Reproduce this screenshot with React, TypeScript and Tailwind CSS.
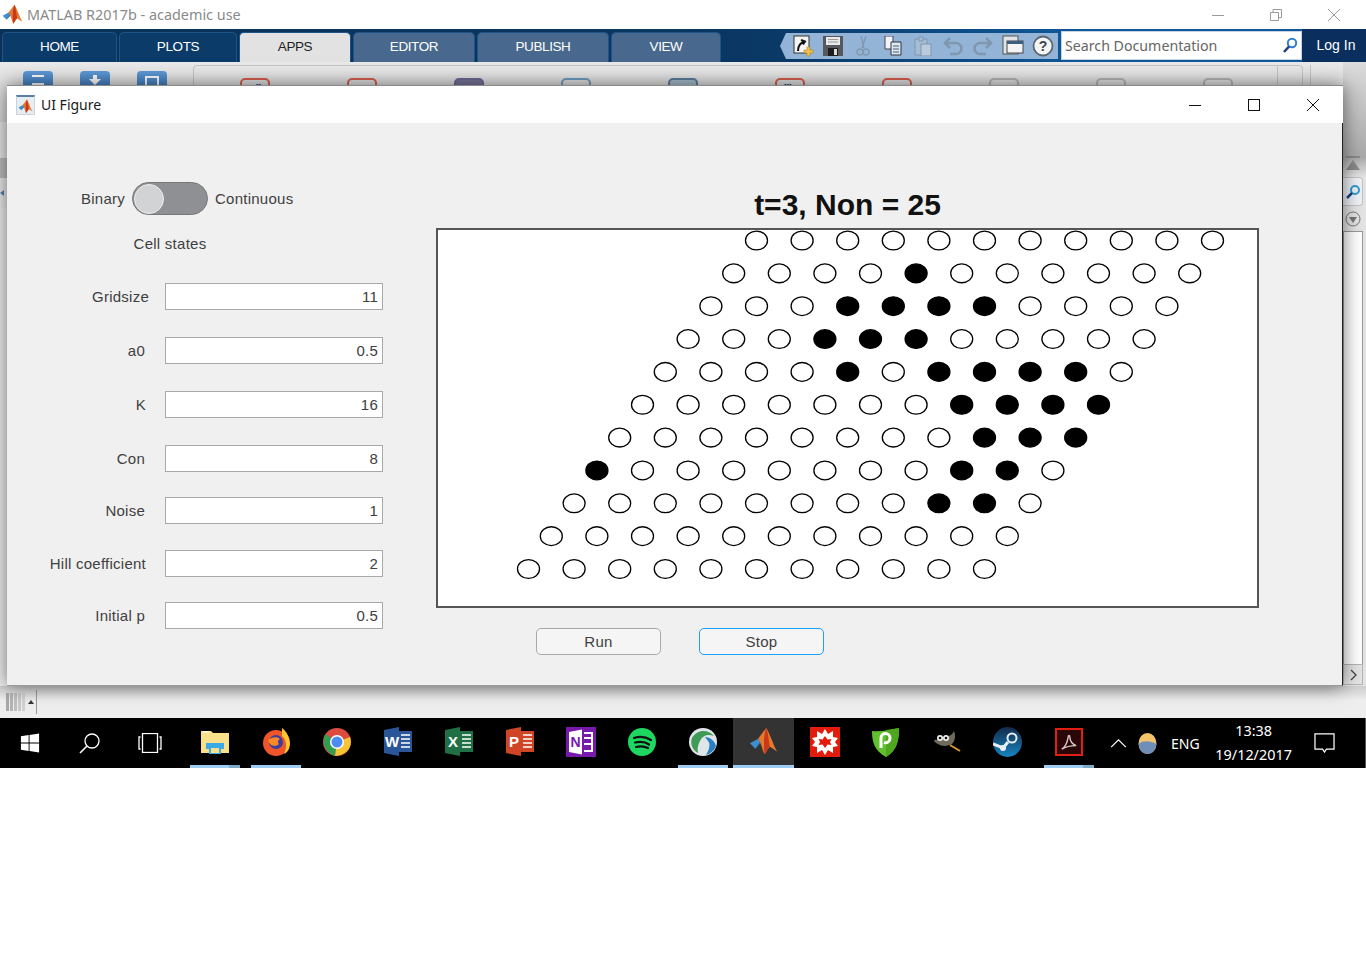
import type { ReactNode } from 'react';

const TABS = [
  { label: 'HOME', w: 'w-[115px]', tone: 'bg-[#0b3b69] text-white' },
  { label: 'PLOTS', w: 'w-[118px]', tone: 'bg-[#0b3b69] text-white' },
  { label: 'APPS', w: 'w-[112px]', tone: 'bg-[#e2e2e2] text-[#222]' },
  { label: 'EDITOR', w: 'w-[122px]', tone: 'bg-[#48698d] text-white' },
  { label: 'PUBLISH', w: 'w-[132px]', tone: 'bg-[#48698d] text-white' },
  { label: 'VIEW', w: 'w-[110px]', tone: 'bg-[#48698d] text-white' },
];

const GALLERY = [
  { tone: 'border-[#d9604f]', dots: 'pl-[14px] text-[#1d4f8c]', glyph: '▪▪' },
  { tone: 'border-[#d9604f]', dots: '', glyph: '' },
  { tone: 'border-[#6d6a96] bg-[#77779c]', dots: '', glyph: '' },
  { tone: 'border-[#6f9fc6]', dots: '', glyph: '' },
  { tone: 'border-[#5c7f9f] bg-[#a9bfd0]', dots: '', glyph: '' },
  { tone: 'border-[#d9604f]', dots: 'pl-[7px] text-[#1d4f8c]', glyph: '▪▪▪' },
  { tone: 'border-[#d9604f]', dots: '', glyph: '' },
  { tone: 'border-[#b5b5b5]', dots: '', glyph: '' },
  { tone: 'border-[#b5b5b5]', dots: '', glyph: '' },
  { tone: 'border-[#b5b5b5]', dots: '', glyph: '' },
];

const FIELDS = [
  { label: 'Gridsize', value: '11', pad: 'pr-[16px]', gap: 'mt-[27px]' },
  { label: 'a0', value: '0.5', pad: 'pr-[20px]', gap: 'mt-[27px]' },
  { label: 'K', value: '16', pad: 'pr-[19px]', gap: 'mt-[27px]' },
  { label: 'Con', value: '8', pad: 'pr-[20px]', gap: 'mt-[27px]' },
  { label: 'Noise', value: '1', pad: 'pr-[20px]', gap: 'mt-[25px]' },
  { label: 'Hill coefficient', value: '2', pad: 'pr-[19px]', gap: 'mt-[26px]' },
  { label: 'Initial p', value: '0.5', pad: 'pr-[20px]', gap: 'mt-[25px]' },
];

// filled cells of each row, row 0 is the top one
const ON: number[][] = [[], [4], [3, 4, 5, 6], [3, 4, 5], [4, 6, 7, 8, 9], [7, 8, 9, 10], [8, 9, 10], [0, 8, 9], [8, 9], [], []];

function MatlabLogo({ size }: { size: number }) {
  return (
    <svg width={size} height={size} viewBox="0 0 32 32">
      <path d="M1 18 L10 13 L13 17 L7 24 Z" fill="#3f8fd0" />
      <path d="M7 24 L13 17 L10 13 L15 12 Z" fill="#1f5f9e" />
      <path d="M10 13 L19 1 C22 5 27 20 31 27 C27 25 25 22 23 22 C20 24 19 29 17 30 C15 26 14 19 10 13 Z" fill="#e8792b" />
      <path d="M19 1 C17 6 16 12 17 30 C19 29 20 24 23 22 C22 14 21 6 19 1 Z" fill="#c8381c" />
    </svg>
  );
}

function Caption({ kind, color }: { kind: 'min' | 'max' | 'restore' | 'close'; color: string }) {
  return (
    <svg width="14" height="14" viewBox="0 0 14 14" fill="none" stroke={color} strokeWidth="1">
      {kind === 'min' && <path d="M1 7.500h12" />}
      {kind === 'max' && <rect x="1.500" y="1.500" width="11" height="11" />}
      {kind === 'restore' && <path d="M1.500 4.500h8v8h-8zM4 4.500v-3h8.500v8h-3" />}
      {kind === 'close' && <path d="M1 1l12 12M13 1L1 13" />}
    </svg>
  );
}

const QUICK: ReactNode[] = [
  <svg key="new" width="22" height="22" viewBox="0 0 22 22">
    <rect x="2" y="1" width="15" height="17" fill="#f4f4f4" stroke="#333" />
    <path d="M6 16c0-5 2-8 6-9M9 5l4 1.500-2 3" fill="none" stroke="#111" strokeWidth="2" />
    <path d="M15 12h3v3h3v3h-3v3h-3v-3h-3v-3h3z" fill="#efc14a" stroke="#a8842a" strokeWidth=".6" />
  </svg>,
  <svg key="save" width="20" height="20" viewBox="0 0 20 20">
    <path d="M0 0h20v20H0z" fill="#55585c" />
    <rect x="3" y="1" width="14" height="8" fill="#e9e9e9" />
    <path d="M5 3.500h10M5 6h10" stroke="#999" />
    <rect x="5" y="12" width="10" height="8" fill="#1d1d1d" />
    <rect x="11" y="13" width="3" height="6" fill="#ddd" />
  </svg>,
  <svg key="cut" width="20" height="20" viewBox="0 0 20 20" fill="none" stroke="#7f97af" strokeWidth="1.300">
    <path d="M8 0l3 12M13 0l-4 12" />
    <circle cx="7" cy="16" r="3" />
    <circle cx="13" cy="16" r="3" />
  </svg>,
  <svg key="copy" width="20" height="20" viewBox="0 0 20 20">
    <path d="M2 0h8v13H2z" fill="#f2f5f8" stroke="#445" />
    <path d="M8 6h10v13H8z" fill="#dfe7ef" stroke="#334" />
    <path d="M10 10h6M10 13h6M10 16h6" stroke="#46607a" />
  </svg>,
  <svg key="paste" width="20" height="20" viewBox="0 0 20 20" fill="#a5bcd2" stroke="#7f97af">
    <path d="M2 3h12v16H2z" />
    <path d="M6 1h4v4H6z" />
    <path d="M8 8h10v12H8z" fill="#b9cbdc" />
  </svg>,
  <svg key="undo" width="22" height="20" viewBox="0 0 22 20" fill="none" stroke="#7f97af" strokeWidth="2.600">
    <path d="M8 2L3 7l5 5M3 7h11a5 5 0 010 11H8" />
  </svg>,
  <svg key="redo" width="22" height="20" viewBox="0 0 22 20" fill="none" stroke="#7f97af" strokeWidth="2.600">
    <path d="M14 2l5 5-5 5M19 7H8a5 5 0 000 11h6" />
  </svg>,
  <svg key="layout" width="22" height="22" viewBox="0 0 22 22">
    <rect x="1" y="1" width="15" height="18" fill="#dfe3e7" stroke="#555" />
    <rect x="5" y="6" width="16" height="12" fill="#f4f4f4" stroke="#444" />
    <rect x="5" y="6" width="16" height="3" fill="#3c5e80" />
  </svg>,
  <svg key="help" width="22" height="22" viewBox="0 0 22 22">
    <circle cx="11" cy="11" r="9.500" fill="#f5f5f5" stroke="#5c6670" strokeWidth="1.800" />
    <text x="11" y="16" textAnchor="middle" fontSize="14" fontWeight="700" fontFamily="Liberation Sans, sans-serif" fill="#3c4650">?</text>
  </svg>,
];

function Letter({ bg, ch }: { bg: string; ch: string }) {
  return (
    <svg width="28" height="29" viewBox="0 0 28 29">
      <path d="M0 3L15 0v29L0 26z" fill={bg} />
      <rect x="14" y="4" width="14" height="21" fill={bg} />
      <path d="M17 8h9M17 12h9M17 16h9M17 20h9" stroke="#fff" strokeWidth="1.500" />
      <text x="8" y="20" textAnchor="middle" fontSize="15" fontWeight="700" fontFamily="Liberation Sans, sans-serif" fill="#fff">{ch}</text>
    </svg>
  );
}

const TASK_ICONS: { key: string; bar?: string; active?: boolean; icon: ReactNode }[] = [
  {
    key: 'explorer',
    bar: 'bg-[linear-gradient(90deg,#9dcdf2_78%,#7fa9c7_78%)]',
    icon: (
      <svg width="28" height="24" viewBox="0 0 28 24">
        <path d="M0 1h10l2 2h16v20H0z" fill="#fbe08c" />
        <rect x="2" y="1" width="6" height="2" fill="#fff6cf" />
        <path d="M5 13h18v6h-3v5h-12v-5H5z" fill="#3aa9e6" />
        <rect x="10" y="18" width="8" height="5" fill="#fbe08c" />
      </svg>
    ),
  },
  {
    key: 'firefox',
    bar: 'bg-[#9dcdf2]',
    icon: (
      <svg width="28" height="28" viewBox="0 0 28 28">
        <circle cx="14" cy="15" r="13" fill="#f0552a" />
        <path d="M20 0c4 3 8 9 8 15 0 5-2 9-6 11 3-6 3-14-2-18z" fill="#ffc52e" />
        <circle cx="14" cy="14" r="7" fill="#3c3e9e" />
        <path d="M6 12c4-3 9-4 12-1-2 1-3 3-1 5-3 3-9 3-11-4z" fill="#f98a25" />
      </svg>
    ),
  },
  {
    key: 'chrome',
    icon: (
      <svg width="28" height="28" viewBox="0 0 28 28">
        <circle cx="14" cy="14" r="14" fill="#dd4b3e" />
        <path d="M14 14L2.500 6C-2 14 2 25 12 28z" fill="#2f9e50" />
        <path d="M14 14l13-5c3 9-2 18-15 19z" fill="#f6c533" />
        <circle cx="14" cy="14" r="7" fill="#fff" />
        <circle cx="14" cy="14" r="5.500" fill="#4c8bf0" />
      </svg>
    ),
  },
  { key: 'word', icon: <Letter bg="#2a5699" ch="W" /> },
  { key: 'excel', icon: <Letter bg="#1f7145" ch="X" /> },
  { key: 'powerpoint', icon: <Letter bg="#d04525" ch="P" /> },
  {
    key: 'onenote',
    icon: (
      <svg width="30" height="30" viewBox="0 0 30 30">
        <rect width="30" height="30" fill="#7719aa" />
        <path d="M3 5l13-2.500v25L3 25z" fill="#fff" />
        <text x="9.500" y="20" textAnchor="middle" fontSize="14" fontWeight="700" fontFamily="Liberation Sans, sans-serif" fill="#7719aa">N</text>
        <path d="M18 6h8v18h-8" fill="none" stroke="#fff" strokeWidth="2" />
        <path d="M18 11h8M18 17h8" stroke="#fff" strokeWidth="2" />
      </svg>
    ),
  },
  {
    key: 'spotify',
    icon: (
      <svg width="28" height="28" viewBox="0 0 28 28">
        <circle cx="14" cy="14" r="14" fill="#1ed760" />
        <path d="M6 10c6-2 12-1 17 2M7 14.500c5-1 10-1 14 2M8 19c4-1 8-1 12 1" fill="none" stroke="#111" strokeWidth="2.200" strokeLinecap="round" />
      </svg>
    ),
  },
  {
    key: 'globe',
    bar: 'bg-[#9dcdf2]',
    icon: (
      <svg width="28" height="28" viewBox="0 0 28 28">
        <circle cx="14" cy="14" r="14" fill="#dfe5e8" />
        <path d="M3 10C8 1 19 1 25 8c-6-2-11-1-14 5-2 4-3 7-2 12C3 22 1 15 3 10z" fill="#3f9a55" />
        <path d="M16 9c5 0 10 4 11 9-2 5-6 8-10 9 3-5 5-11 2-14z" fill="#2a7fc4" />
      </svg>
    ),
  },
  { key: 'matlab', bar: 'bg-[#9dcdf2]', active: true, icon: <MatlabLogo size={29} /> },
  {
    key: 'wolfram',
    icon: (
      <div className="flex h-[30px] w-[30px] items-center justify-center bg-[#e31b0c]">
        <svg width="26" height="26" viewBox="0 0 26 26">
          <path d="M13 0l3 5 5-3 0 6 5 1-3 4 3 4-5 1 0 6-5-3-3 5-3-5-5 3 0-6-5-1 3-4-3-4 5-1 0-6 5 3z" fill="#fff" />
          <path d="M13 7l2.500 3.500 4-.5-1.500 3 1.500 3-4-.5L13 19l-2.500-3.500-4 .5 1.500-3-1.500-3 4 .5z" fill="#e31b0c" />
        </svg>
      </div>
    ),
  },
  {
    key: 'purevpn',
    icon: (
      <svg width="27" height="30" viewBox="0 0 27 30">
        <path d="M0 4c9 1 18-1 27-3 0 11-1 22-13 29C2 24 0 14 0 4z" fill="#62c02e" />
        <path d="M14 30C25 24 27 12 27 1L14 3z" fill="#4fa61f" />
        <path d="M9 21V11a4.500 4.500 0 019 0 4.500 4.500 0 01-6 4.500" fill="none" stroke="#fff" strokeWidth="3" />
      </svg>
    ),
  },
  {
    key: 'gimp',
    icon: (
      <svg width="28" height="22" viewBox="0 0 28 22">
        <path d="M1 9c4 0 8-1 13-3 3-1 6-3 7-6 2 5 1 10-2 13-4 2-10 3-14 0C3 12 1 11 1 9z" fill="#6f6a5c" />
        <circle cx="7" cy="7" r="3" fill="#eee" />
        <circle cx="13" cy="7" r="3" fill="#eee" />
        <circle cx="7" cy="7" r="1.300" fill="#111" />
        <circle cx="13" cy="7" r="1.300" fill="#111" />
        <path d="M17 14l10 6" stroke="#d59a3c" strokeWidth="2" />
      </svg>
    ),
  },
  {
    key: 'steam',
    icon: (
      <svg width="29" height="30" viewBox="0 0 29 30">
        <defs>
          <linearGradient id="steamFill" x1="0" y1="0" x2="0" y2="1">
            <stop offset="0" stopColor="#14294a" />
            <stop offset="1" stopColor="#1686c4" />
          </linearGradient>
        </defs>
        <ellipse cx="14.500" cy="15" rx="14.500" ry="15" fill="url(#steamFill)" />
        <circle cx="19" cy="11" r="4.500" fill="none" stroke="#e8eef3" strokeWidth="2" />
        <path d="M0 17l10 4 5-6" fill="none" stroke="#e8eef3" strokeWidth="3" />
        <circle cx="10" cy="21" r="3" fill="#e8eef3" />
      </svg>
    ),
  },
  {
    key: 'acrobat',
    bar: 'bg-[linear-gradient(90deg,#9dcdf2_78%,#7fa9c7_78%)]',
    icon: (
      <div className="flex h-[28px] w-[28px] items-center justify-center border-2 border-[#e01e12] bg-[#2a0707]">
        <svg width="18" height="18" viewBox="0 0 20 20" fill="none" stroke="#d9c9c9" strokeWidth="1.600">
          <path d="M2 18c3-2 6-7 7-13 0-3 2-3 2 0 0 4 3 8 7 9-4 0-10 0-16 4z" />
        </svg>
      </div>
    ),
  },
];

function Plot() {
  return (
    <svg width="819" height="376" viewBox="0 0 819 376">
      {ON.map((filled, r) =>
        Array.from({ length: 11 }, (_, i) => (
          <ellipse
            key={`${r}-${i}`}
            cx={318.5 - 22.8 * r + 45.6 * i}
            cy={10.5 + 32.85 * r}
            rx={11}
            ry={9.4}
            fill={filled.includes(i) ? '#000' : '#fff'}
            stroke="#000"
            strokeWidth={1.3}
          />
        )),
      )}
    </svg>
  );
}

export default function App() {
  return (
    <div className="relative min-h-[954px] w-[1366px] overflow-hidden bg-white font-['Liberation_Sans',sans-serif]">
      {/* main window title */}
      <div className="flex h-[29px] items-center bg-white">
        <div className="ml-[2px] mr-[4px] flex"><MatlabLogo size={21} /></div>
        <span className="font-['Noto_Sans',sans-serif] text-[14.4px] text-[#8a8a8a]">MATLAB R2017b - academic use</span>
        <div className="ml-auto flex items-center gap-[44px] pr-[25px]">
          <Caption kind="min" color="#9a9a9a" />
          <Caption kind="restore" color="#9a9a9a" />
          <Caption kind="close" color="#9a9a9a" />
        </div>
      </div>

      {/* ribbon tabs */}
      <div className="flex h-[33px] items-end bg-[linear-gradient(90deg,#0a3258_0%,#0a3763_55%,#0f5a9c_80%,#0f5a9c_100%)] pl-[2px]">
        <div className="flex h-[30px] gap-[2px]">
          {TABS.map((t) => (
            <div key={t.label} className={`flex items-center justify-center rounded-t-[5px] border border-b-0 border-[#1f5488] text-[13.5px] tracking-[-0.4px] ${t.w} ${t.tone}`}>
              {t.label}
            </div>
          ))}
        </div>
        <div className="ml-[59px] flex h-[33px] items-start self-end pt-[4px]">
          <div className="flex h-[26px] w-[278px] items-center bg-[#93b4d6] pl-[8px] [clip-path:polygon(0_50%,6px_0,100%_0,100%_100%,6px_100%)]">
            {QUICK.map((icon, i) => (
              <div key={i} className="flex w-[30px] shrink-0 justify-center">{icon}</div>
            ))}
          </div>
        </div>
        <div className="ml-[3px] flex h-[33px] items-center self-end">
          <div className="flex h-[29px] w-[241px] items-center justify-between border border-[#c5d3e2] bg-white pl-[3px] pr-[3px]">
            <span className="font-['Noto_Sans',sans-serif] text-[14.2px] text-[#666]">Search Documentation</span>
            <svg width="16" height="18" viewBox="0 0 16 18" fill="none">
              <circle cx="10" cy="6" r="4.200" stroke="#2e7fd0" strokeWidth="2" />
              <path d="M7 9.500L2 15" stroke="#1d3f86" strokeWidth="2.600" />
            </svg>
          </div>
        </div>
        <div className="flex h-[33px] flex-1 items-center justify-center self-end bg-[#0a2f5f] pl-[4px] text-[14px] text-white">Log In</div>
      </div>

      {/* desktop area behind the figure window */}
      <div className="relative h-[656px] bg-[linear-gradient(180deg,#e9e9e9,#d6d6d6_60px,#e6e6e6_60px)]">
        <div className="flex">
          <div className="flex gap-[27px] pl-[23px] pt-[9px]">
            <div className="flex h-[30px] w-[30px] justify-center rounded-[4px] bg-[linear-gradient(180deg,#5f9ad8,#2a68ad)] pt-[4px]">
              <div className="h-[10px] w-[12px] border-y-2 border-white" />
            </div>
            <div className="flex h-[30px] w-[30px] justify-center rounded-[4px] bg-[linear-gradient(180deg,#5f9ad8,#2a68ad)] pt-[4px]">
              <svg width="14" height="12" viewBox="0 0 14 12" fill="#fff"><path d="M5 0h4v4h4l-6 6-6-6h4z" /></svg>
            </div>
            <div className="flex h-[30px] w-[30px] justify-center rounded-[4px] bg-[linear-gradient(180deg,#5f9ad8,#2a68ad)] pt-[5px]">
              <div className="h-[18px] w-[14px] border-2 border-white" />
            </div>
          </div>
          <div className="ml-[26px] mt-[3px] flex h-[60px] w-[1110px] rounded-t-[4px] border border-[#c4c4c4] pl-[46px] pt-[12px]">
            <div className="flex gap-[77px]">
              {GALLERY.map((g, i) => (
                <div key={i} className={`h-[30px] w-[30px] shrink-0 rounded-[5px] border-2 text-[7px] leading-[10px] ${g.tone} ${g.dots}`}>{g.glyph}</div>
              ))}
            </div>
            <div className="ml-auto mr-[24px] -mt-[12px] w-px bg-[#c4c4c4]" />
          </div>
          <div className="ml-[7px] mt-[3px] h-[60px] w-px bg-[#c4c4c4]" />
        </div>

        {/* left dock strip */}
        <div className="absolute left-0 top-[96px] flex h-[528px] w-[7px] flex-col bg-[#bdbdbd]">
          <div className="mt-[20px] flex h-[30px] items-center justify-start bg-[#e9e9e9]">
            <div className="h-0 w-0 border-y-[3px] border-r-[4px] border-y-transparent border-r-[#5b7ea3]" />
          </div>
          <div className="flex-1 bg-[#efefef]" />
        </div>

        {/* right dock strip */}
        <div className="absolute right-0 top-0 flex h-[656px] w-[23px] flex-col bg-[linear-gradient(180deg,#dcdcdc,#a9a9a9_95px,#e4e4e4_115px)]">
          <div className="flex h-[115px] items-end justify-center pb-[5px] pr-[3px]">
            <svg width="14" height="16" viewBox="0 0 14 16" fill="#8a8a8a"><rect y="0" width="14" height="2" /><path d="M7 4l7 10H0z" /></svg>
          </div>
          <div className="flex h-[29px] w-[20px] items-center justify-center rounded-r-[4px] border border-l-0 border-[#c4c4c4] bg-[#eef1f5]">
            <svg width="16" height="16" viewBox="0 0 16 16" fill="none">
              <circle cx="10" cy="6" r="4" stroke="#2e9bd6" strokeWidth="2" />
              <path d="M7 9l-5 5" stroke="#1d3f86" strokeWidth="2.500" />
            </svg>
          </div>
          <div className="flex h-[25px] w-[20px] items-center justify-center">
            <svg width="16" height="16" viewBox="0 0 16 16" fill="none"><circle cx="8" cy="8" r="7" stroke="#777" /><path d="M4 6h8l-4 6z" fill="#777" /></svg>
          </div>
          <div className="w-[20px] flex-1 border-x border-t border-[#9a9a9a] bg-white" />
          <div className="flex h-[21px] w-[20px] items-center justify-center border border-[#b5b5b5] bg-[#e4e4e4]">
            <svg width="10" height="12" viewBox="0 0 10 12" fill="none" stroke="#444" strokeWidth="1.300"><path d="M3 1l5 5-5 5" /></svg>
          </div>
          <div className="h-[33px]" />
        </div>

        {/* bottom status strip */}
        <div className="absolute bottom-0 left-0 flex h-[32px] w-full items-center bg-[linear-gradient(180deg,#cfcfcf,#eeeeee_45%)]">
          <div className="ml-[6px] flex h-[18px] items-center gap-px">
            <div className="h-[18px] w-[3px] bg-[#a9a9a9]" />
            <div className="h-[18px] w-[3px] bg-[#b5b5b5]" />
            <div className="h-[18px] w-[3px] bg-[#c0c0c0]" />
            <div className="h-[18px] w-[3px] bg-[#cacaca]" />
            <div className="h-[18px] w-[3px] bg-[#d2d2d2]" />
          </div>
          <div className="ml-[3px] mr-[2px] h-0 w-0 border-x-[3px] border-b-[4px] border-x-transparent border-b-[#333]" />
          <div className="h-[24px] w-px bg-[#999]" />
        </div>

        {/* figure window */}
        <div className="absolute left-[7px] top-[23px] flex h-[601px] w-[1336px] flex-col border-t border-[#8a8a8a] bg-[#f0f0f0] shadow-[0_0_18px_rgba(0,0,0,0.55)]">
          <div className="flex h-[37px] shrink-0 items-center bg-white">
            <div className="ml-[9px] mr-[6px] flex h-[20px] w-[19px] items-end justify-center border border-[#c9d3dc] border-t-2 border-t-[#5b7ea3] bg-[#e6edf3]">
              <MatlabLogo size={15} />
            </div>
            <span className="font-['Noto_Sans',sans-serif] text-[14px] text-[#1a1a1a]">UI Figure</span>
            <div className="ml-auto flex items-center gap-[45px] pr-[23px]">
              <Caption kind="min" color="#111" />
              <Caption kind="max" color="#111" />
              <Caption kind="close" color="#111" />
            </div>
          </div>

          <div className="flex flex-1 border-b border-r border-b-[#9a9a9a] border-r-[#222] text-[15px] tracking-[0.25px] text-[#404040]">
            <div className="w-[376px] shrink-0 pt-[59px]">
              <div className="flex h-[33px] items-center">
                <span className="w-[118px] pt-[2px] text-right">Binary</span>
                <div className="ml-[7px] flex h-[33px] w-[76px] items-center rounded-full border border-[#777] bg-[#8f9093] pl-px">
                  <div className="h-[30px] w-[30px] rounded-full border border-[#eee] bg-[#d2d3d5]" />
                </div>
                <span className="ml-[7px] pt-[2px]">Continuous</span>
              </div>
              <div className="mt-[21px] w-[326px] text-center leading-[16px]">Cell states</div>
              <div className="pt-[4px]">
                {FIELDS.map((f) => (
                  <div key={f.label} className={`flex h-[27px] items-center ${f.gap}`}>
                    <span className={`w-[158px] shrink-0 pt-[2px] text-right ${f.pad}`}>{f.label}</span>
                    <div className="flex h-[27px] flex-1 items-center justify-end border border-[#a9a9a9] bg-white pr-[4px] pt-[2px]">{f.value}</div>
                  </div>
                ))}
              </div>
            </div>

            <div className="ml-[53px] w-[823px] pt-[65px]">
              <div className="mb-[6px] h-[34px] text-center text-[30px] font-bold leading-[34px] tracking-normal text-[#111]">t=3, Non = 25</div>
              <div className="h-[380px] border-2 border-[#555] bg-white">
                <Plot />
              </div>
              <div className="ml-[100px] mt-[20px] flex gap-[38px]">
                <div className="flex h-[27px] w-[125px] items-center justify-center rounded-[5px] border border-[#a9a9a9] bg-[#f5f5f5] pt-[2px]">Run</div>
                <div className="flex h-[27px] w-[125px] items-center justify-center rounded-[5px] border border-[#1a9fff] bg-[#f5f5f5] pt-[2px]">Stop</div>
              </div>
            </div>
          </div>
        </div>
      </div>

      {/* taskbar */}
      <div className="flex h-[50px] items-stretch bg-black text-white">
        <div className="flex w-[60px] items-center justify-center">
          <svg width="20" height="20" viewBox="0 0 22 22" fill="#fff">
            <path d="M1 3.500l8.500-1.200v8.200H1zM10.500 2.100L21 .6v9.900H10.500zM1 11.500h8.500v8.200L1 18.500zM10.500 11.500H21v9.900l-10.500-1.500z" />
          </svg>
        </div>
        <div className="flex w-[60px] items-center justify-center pr-[2px]">
          <svg width="21" height="21" viewBox="0 0 21 21" fill="none" stroke="#fff" strokeWidth="1.300">
            <circle cx="13" cy="8" r="7" />
            <path d="M8 13L1 20" strokeWidth="1.600" />
          </svg>
        </div>
        <div className="flex w-[60px] items-center justify-center">
          <svg width="24" height="20" viewBox="0 0 24 20" fill="none" stroke="#fff" strokeWidth="1.300">
            <rect x="4.500" y="0.500" width="15" height="19" />
            <path d="M2.500 4H1v12h1.500M21.500 4H23v12h-1.500" />
          </svg>
        </div>
        <div className="ml-[4px] flex">
          {TASK_ICONS.map((t) => (
            <div key={t.key} className={`flex w-[61px] flex-col items-center ${t.active ? 'bg-[#333333]' : ''}`}>
              <div className="flex flex-1 items-center justify-center">{t.icon}</div>
              <div className={`h-[3px] ${t.active ? 'w-[61px]' : 'w-[50px]'} ${t.bar ?? ''}`} />
            </div>
          ))}
        </div>
        <div className="ml-[11px] flex items-center">
          <svg width="17" height="11" viewBox="0 0 18 12" fill="none" stroke="#fff" strokeWidth="1.300"><path d="M1 10l8-8 8 8" /></svg>
          <svg className="ml-[11px]" width="19" height="21" viewBox="0 0 19 21">
            <ellipse cx="9.500" cy="10.500" rx="9" ry="10.500" fill="#f2c36b" />
            <path d="M.5 11c5-4 12-3 18 0-1 6-4 10-9 10s-8-4-9-10z" fill="#6f8fb8" />
          </svg>
          <span className="ml-[14px] font-['Noto_Sans',sans-serif] text-[14px]">ENG</span>
        </div>
        <div className="ml-[16px] flex w-[76px] flex-col items-center justify-center gap-[6px] font-['Noto_Sans',sans-serif] text-[14.4px] leading-[18px]">
          <span>13:38</span>
          <span>19/12/2017</span>
        </div>
        <div className="ml-[22px] flex items-center">
          <svg width="21" height="20" viewBox="0 0 22 21" fill="none" stroke="#fff" strokeWidth="1.300">
            <path d="M1 1h20v16h-8l-2 3-2-3H1z" />
          </svg>
        </div>
        <div className="ml-auto w-px self-stretch bg-[#555]" />
      </div>
    </div>
  );
}
